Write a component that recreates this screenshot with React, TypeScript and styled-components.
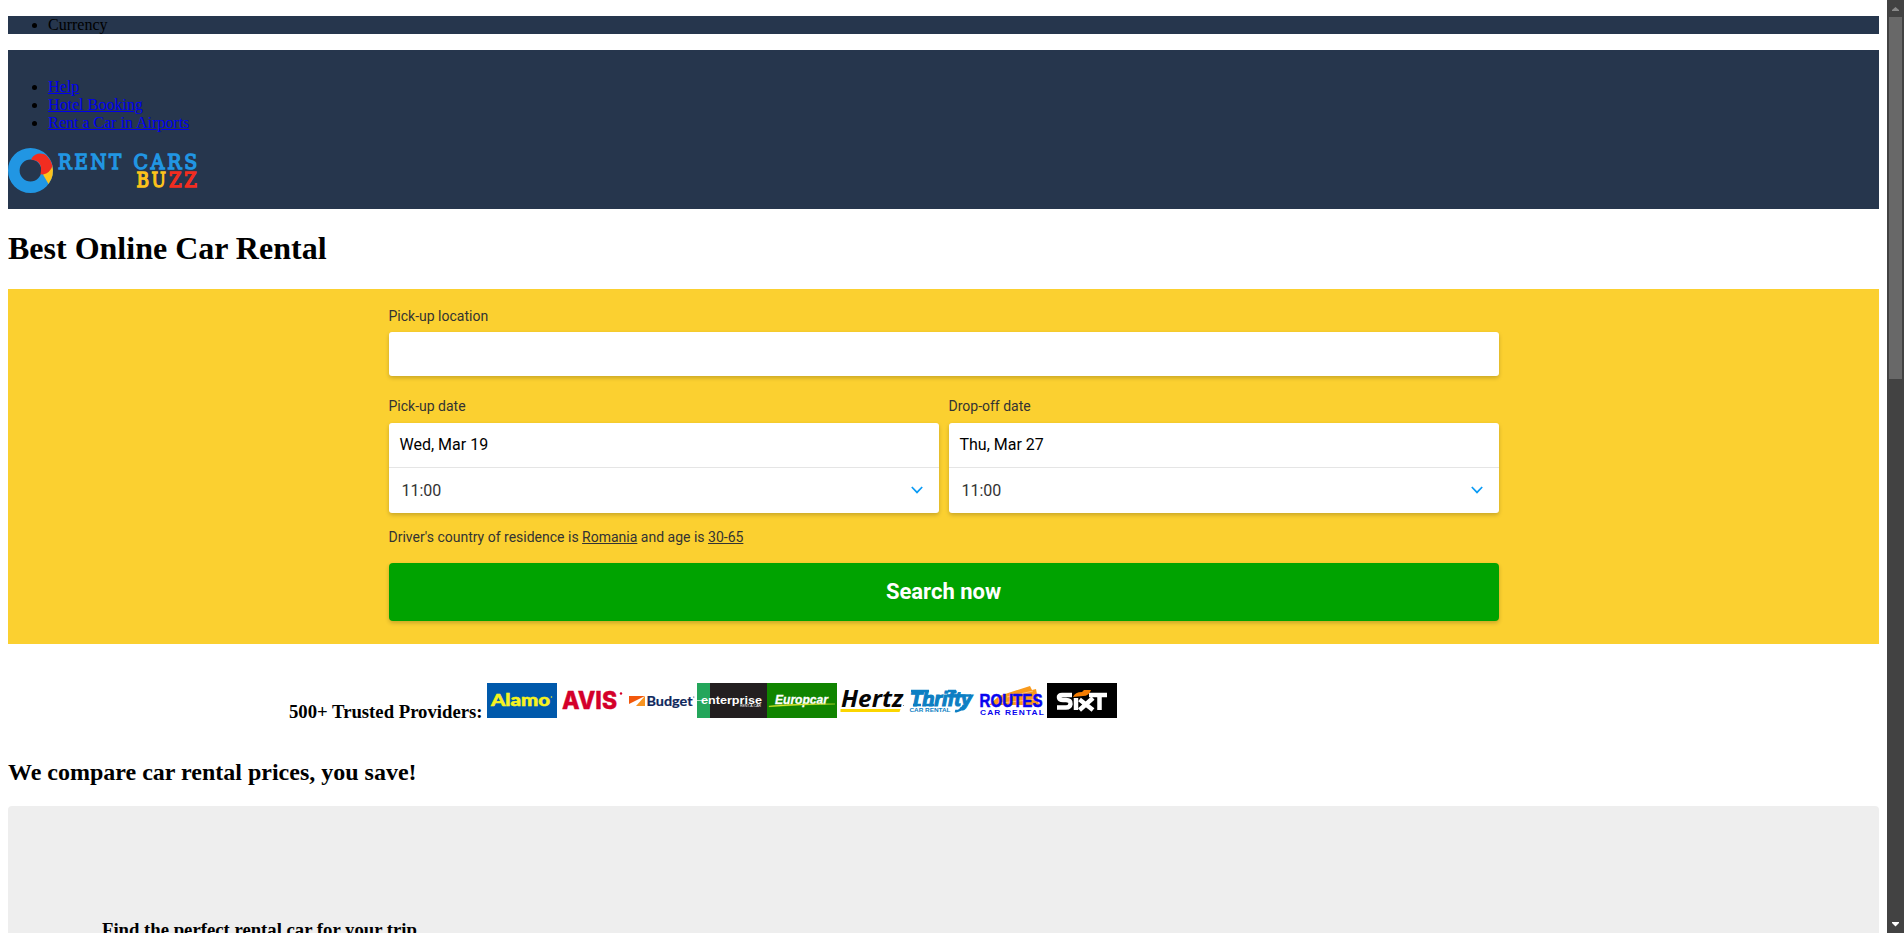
import React from "react";
import styled, { createGlobalStyle } from "styled-components";

const GlobalStyle = createGlobalStyle`
  html, body { margin: 0; padding: 0; background: #fff; overflow: hidden; }
  body { font-family: "Liberation Serif", "Times New Roman", serif; font-size: 16px; color: #000; }
`;

const Screen = styled.div`
  display: flex;
  width: 100%;
  height: 933px;
  overflow: hidden;
`;

const Page = styled.main`
  flex: 1;
  min-width: 0;
  padding: 16px 8px 0;
`;

const List = styled.ul`
  margin: 0;
  padding: 0 0 0 40px;
  line-height: 18px;
`;

const CurrencyBar = styled.div`
  background: #26364d;
  height: 18px;
  margin-bottom: 16px;
`;

const Header = styled.header`
  background: #26364d;
  height: 159px;
  box-sizing: border-box;
  padding-top: 28px;
`;

const NavLink = styled.a`
  color: #0000ee;
  text-decoration: underline;
`;

const Logo = styled.svg`
  display: block;
  margin-top: 16px;
`;

const Title = styled.h1`
  margin: 21px 0 22px;
  font-size: 32px;
  line-height: 37px;
`;

const SearchPanel = styled.section`
  background: #fbd030;
  height: 355px;
  box-sizing: border-box;
  display: flex;
  justify-content: center;
  padding-top: 17px;
  font-family: Roboto, "Liberation Sans", sans-serif;
`;

const Form = styled.form`
  width: 1110px;
`;

const Label = styled.label`
  display: block;
  font-size: 14px;
  line-height: 20px;
  color: #333;
`;

const card = `
  background: #fff;
  border-radius: 3px;
  box-shadow: 0 2px 4px rgba(0, 0, 0, 0.2);
`;

const LocationInput = styled.div`
  ${card}
  height: 44px;
  margin: 6px 0 20px;
`;

const DateColumns = styled.div`
  display: grid;
  grid-template-columns: 1fr 1fr;
  gap: 10px;
`;

const DateCard = styled.div`
  ${card}
  height: 90px;
  margin-top: 7px;
`;

const DateRow = styled.div`
  height: 44px;
  line-height: 43px;
  padding-left: 11px;
  border-bottom: 1px solid #e5e5e5;
  font-size: 16px;
`;

const TimeRow = styled.div`
  display: flex;
  align-items: center;
  justify-content: space-between;
  height: 44px;
  padding: 0 16px 0 13px;
  font-size: 16px;
  color: #333;
`;

const DriverNote = styled.p`
  margin: 14px 0 16px;
  font-size: 14px;
  line-height: 20px;
  color: #333;
`;

const SearchButton = styled.button`
  display: block;
  width: 100%;
  height: 58px;
  padding: 0 0 2px;
  border: 0;
  border-radius: 4px;
  background: #00a300;
  box-shadow: 0 2px 4px rgba(0, 0, 0, 0.2);
  color: #fff;
  font: bold 22px Roboto, "Liberation Sans", sans-serif;
`;

const Providers = styled.section`
  display: flex;
  align-items: flex-end;
  margin: 39px 0 0 281px;
  height: 35px;
`;

const ProvidersTitle = styled.h3`
  width: 198px;
  margin: 0 0 -4px;
  font-size: 18.72px;
  line-height: 21px;
  white-space: nowrap;
`;

const Brand = styled.svg`
  display: block;
  flex: none;
`;

const SubTitle = styled.h2`
  margin: 40px 0 20px;
  font-size: 24px;
  line-height: 28px;
`;

const Promo = styled.section`
  height: 300px;
  padding: 112px 0 0 94px;
  box-sizing: border-box;
  background: #eee;
  border-radius: 4px;
`;

const PromoTitle = styled.h3`
  margin: 0;
  font-size: 18.72px;
  line-height: 24px;
`;

const Scrollbar = styled.div`
  display: flex;
  flex-direction: column;
  align-items: center;
  width: 17px;
  height: 933px;
  background: #424242;
`;

const Thumb = styled.div`
  width: 13px;
  height: 362px;
  background: #686868;
`;

const Spacer = styled.div`
  flex: 1;
`;

const Chevron = () => (
  <svg width="12" height="8" viewBox="0 0 12 8">
    <path d="M.8 1 6 6.4 11.2 1" fill="none" stroke="#0a9bf5" strokeWidth="1.7" />
  </svg>
);

const fit = (length: number) => ({ textLength: length, lengthAdjust: "spacingAndGlyphs" as const });

const SiteLogo = () => (
  <Logo width="190" height="45" viewBox="0 0 190 45">
    <circle cx="22.5" cy="22.5" r="16.7" fill="none" stroke="#2196e3" strokeWidth="11.6" />
    <path d="M44 17Q47 27 40.500 36L35 26.500Z" fill="#fdc21b" />
    <path d="M23.500 10.500C27 5 34 4 39 8Q43 12 44.500 18Q42 25 35 26.500L32.500 26.300Q35.500 13 23.500 11.800Z" fill="#f22d20" />
    <g fontFamily="DejaVu Serif, serif" fontSize="20" strokeWidth="1.4" letterSpacing="3">
      <g fill="#2196e3" stroke="#2196e3">
        <text x="50" y="21.200" {...fit(66)}>RENT</text>
        <text x="125.5" y="21.200" {...fit(66.500)}>CARS</text>
      </g>
      <text x="128.500" y="38.500" fill="#fdc21b" stroke="#fdc21b" {...fit(32)}>BU</text>
      <text x="161" y="38.500" fill="#f22d20" stroke="#f22d20" {...fit(30.500)}>ZZ</text>
    </g>
  </Logo>
);

const Alamo = () => (
  <Brand width="70" height="35" fontFamily="Lato, sans-serif">
    <rect width="70" height="35" fill="#0059ab" />
    <text x="4" y="23" fontSize="16" fontWeight="900" fill="#f7f320" stroke="#f7f320" strokeWidth=".5" {...fit(59)}>Alamo</text>
    <circle cx="64.500" cy="14" r=".8" fill="#f7f320" />
  </Brand>
);

const Avis = () => (
  <Brand width="70" height="35">
    <text x="5" y="26" fontFamily="Inter, sans-serif" fontSize="24" fontWeight="800" fill="#d4002a" stroke="#d4002a" strokeWidth=".4" {...fit(55)}>AVIS</text>
    <circle cx="64" cy="10.500" r="1.200" fill="#d4002a" />
  </Brand>
);

const Budget = () => (
  <Brand width="70" height="35">
    <path d="M2 13h16L2 21Z" fill="#f2580c" />
    <path d="M18 13v10h-9Z" fill="#f89420" />
    <text x="19.500" y="22.500" fontFamily="Lato, sans-serif" fontSize="13.500" fontWeight="bold" fill="#10285d" stroke="#10285d" strokeWidth=".2" {...fit(46)}>Budget</text>
    <circle cx="66.800" cy="14" r=".6" fill="#10285d" />
  </Brand>
);

const Enterprise = () => (
  <Brand width="70" height="35">
    <rect width="70" height="35" fill="#231f20" />
    <rect width="13" height="35" fill="#24a65b" />
    <path d="M0 17.500h11" stroke="#d8eee0" strokeWidth=".8" />
    <text x="4" y="21" fontFamily="Liberation Sans, sans-serif" fontSize="10.500" fontWeight="bold" fill="#fff" {...fit(61)}>enterprise</text>
    <text x="43" y="24" fontFamily="Liberation Sans, sans-serif" fontSize="3" fill="#fff" {...fit(21)}>RENT-A-CAR</text>
  </Brand>
);

const Europcar = () => (
  <Brand width="70" height="35">
    <rect width="70" height="35" fill="#108400" />
    <text x="8" y="20.500" fontFamily="Liberation Sans, sans-serif" fontSize="12.500" fontWeight="bold" fontStyle="italic" fill="#fff" stroke="#fff" strokeWidth=".3" {...fit(53)}>Europcar</text>
    <path d="M2 23Q30 20 68 21Q35 21.500 2 23.700Z" fill="#e7ec36" stroke="#c8df2a" strokeWidth=".4" />
  </Brand>
);

const Hertz = () => (
  <Brand width="70" height="35">
    <text x="4" y="23.500" fontFamily="Open Sans, sans-serif" fontSize="23" fontWeight="bold" fontStyle="italic" fill="#050505" {...fit(62)}>Hertz</text>
    <path d="M3.500 26H63.500L62.500 29H3.500Z" fill="#fbd600" />
    <circle cx="66.500" cy="22.500" r=".6" fill="#777" />
  </Brand>
);

const Thrifty = () => (
  <Brand width="70" height="35">
    <g fill="#0d7fc3" stroke="#0d7fc3">
      <text x="3" y="22.500" fontFamily="Liberation Sans, sans-serif" fontSize="21" fontWeight="bold" fontStyle="italic" strokeWidth="1.2" {...fit(62)}>Thrifty</text>
      <path d="M4 8H22M41 8H49M40 12.500H64M6 22H14M18 22H27" strokeWidth="2.400" />
    </g>
    <path d="M48 28Q53 29 57 22" stroke="#0d7fc3" strokeWidth="2.500" fill="none" />
    <text x="2.500" y="28.500" fontFamily="Liberation Sans, sans-serif" fontSize="5.300" fontWeight="bold" fill="#0d7fc3" {...fit(41)}>CAR RENTAL</text>
  </Brand>
);

const Routes = () => (
  <Brand width="70" height="35">
    <path d="M22 13 53 3l2 4 4-1 3 16H12Z" fill="#f99a1c" />
    <path d="M30 14 56 8M24 20 60 16" stroke="#ffc471" strokeWidth="1" />
    <g fontFamily="Liberation Sans, sans-serif" fontWeight="bold" fill="#0904ef">
      <text x="2.500" y="23.500" fontSize="18" stroke="#0904ef" strokeWidth=".5" {...fit(63)}>ROUTES</text>
      <text x="3" y="31.500" fontSize="7.500" letterSpacing="1" {...fit(65)}>CAR RENTAL</text>
    </g>
  </Brand>
);

const Sixt = () => (
  <Brand width="70" height="35">
    <rect width="70" height="35" fill="#000" />
    <g fill="none" stroke="#fff" strokeWidth="4.5">
      <path d="M25 12H15Q11.500 12 12 14.500Q12.500 17 16 17H19Q24 17 23.500 21Q23 24.500 19 24.500H10" />
      <path d="M29 15V27" />
      <path d="M32.500 16.500 46 27M46 15 32.500 27" />
      <path d="M42 12H60M52.500 12V27" />
    </g>
    <path d="M26 14Q28 9 35 9L37 7H44Q42 13 36 13Z" fill="#f57c00" />
  </Brand>
);

const dates = [
  { label: "Pick-up date", date: "Wed, Mar 19" },
  { label: "Drop-off date", date: "Thu, Mar 27" },
];

const brands = [Alamo, Avis, Budget, Enterprise, Europcar, Hertz, Thrifty, Routes, Sixt];

export default function App() {
  return (
    <Screen>
      <GlobalStyle />
      <Page>
        <CurrencyBar>
          <List><li>Currency</li></List>
        </CurrencyBar>
        <Header>
          <List>
            {["Help", "Hotel Booking", "Rent a Car in Airports"].map((name) => (
              <li key={name}><NavLink href="#">{name}</NavLink></li>
            ))}
          </List>
          <SiteLogo />
        </Header>
        <Title>Best Online Car Rental</Title>
        <SearchPanel>
          <Form>
            <Label>Pick-up location</Label>
            <LocationInput />
            <DateColumns>
              {dates.map(({ label, date }) => (
                <div key={label}>
                  <Label>{label}</Label>
                  <DateCard>
                    <DateRow>{date}</DateRow>
                    <TimeRow>11:00<Chevron /></TimeRow>
                  </DateCard>
                </div>
              ))}
            </DateColumns>
            <DriverNote>
              Driver's country of residence is <u>Romania</u> and age is <u>30-65</u>
            </DriverNote>
            <SearchButton type="button">Search now</SearchButton>
          </Form>
        </SearchPanel>
        <Providers>
          <ProvidersTitle>500+ Trusted Providers:</ProvidersTitle>
          {brands.map((BrandLogo, i) => <BrandLogo key={i} />)}
        </Providers>
        <SubTitle>We compare car rental prices, you save!</SubTitle>
        <Promo>
          <PromoTitle>Find the perfect rental car for your trip</PromoTitle>
        </Promo>
      </Page>
      <Scrollbar>
        <svg width="17" height="17"><path d="M5 11V10L8.500 7 12 10V11Z" fill="#898989" /></svg>
        <Thumb />
        <Spacer />
        <svg width="17" height="17"><path d="M5 6V7L8.500 10.500 12 7V6Z" fill="#fff" /></svg>
      </Scrollbar>
    </Screen>
  );
}
